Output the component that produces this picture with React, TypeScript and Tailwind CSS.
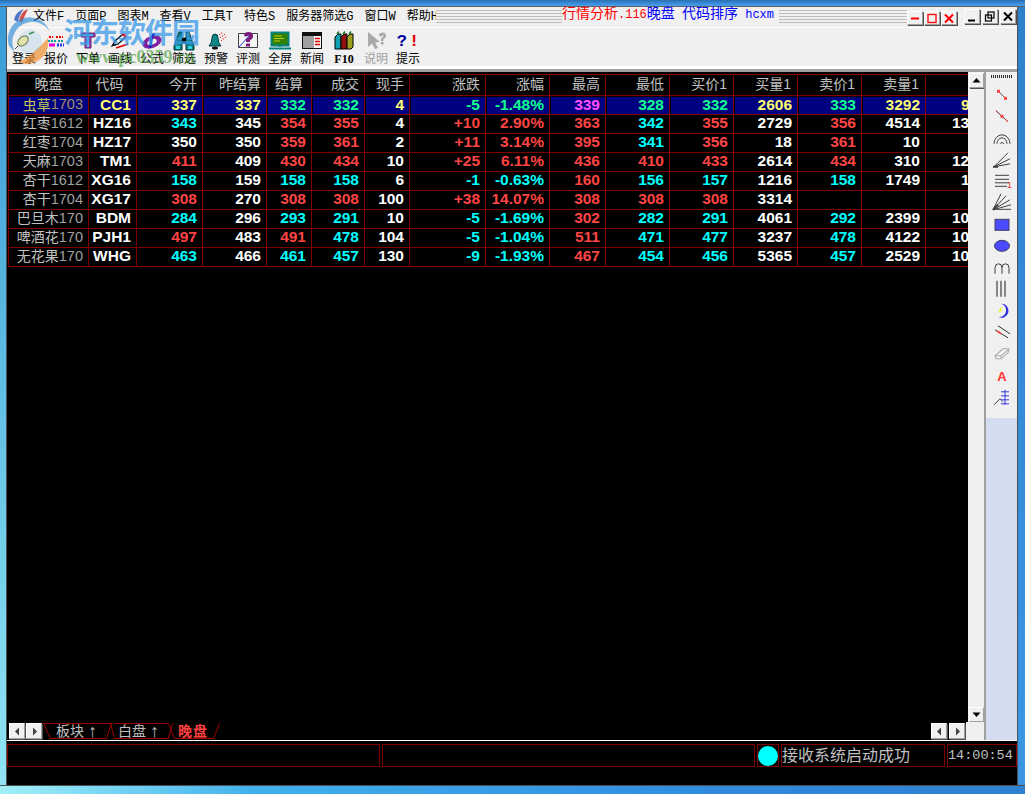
import React from "react";

const MONO = "font-['Liberation_Mono','Noto_Sans_CJK_SC',monospace]";
const SANS = "font-['Liberation_Sans','Noto_Sans_CJK_SC',sans-serif]";

const COLS =
  "grid grid-cols-[80px_48px_66px_64px_45px_53px_45px_76px_64px_56px_64px_64px_64px_64px_64px_42px]";

const COLOR: Record<string, string> = {
  r: "text-[#ff4444]",
  c: "text-[#00ffff]",
  w: "text-white",
  y: "text-[#ffff70]",
  g: "text-[#10ff90]",
  m: "text-[#ff50ff]",
};

const HEAD: [string, string][] = [
  ["晚盘", "justify-center"],
  ["代码", "justify-center pr-[6px]"],
  ["今开", "justify-end pr-[5px]"],
  ["昨结算", "justify-end pr-[5px]"],
  ["结算", "justify-center"],
  ["成交", "justify-end pr-[5px]"],
  ["现手", "justify-end pr-[5px]"],
  ["涨跌", "justify-end pr-[5px]"],
  ["涨幅", "justify-end pr-[5px]"],
  ["最高", "justify-end pr-[5px]"],
  ["最低", "justify-end pr-[5px]"],
  ["买价1", "justify-end pr-[6px]"],
  ["买量1", "justify-end pr-[6px]"],
  ["卖价1", "justify-end pr-[6px]"],
  ["卖量1", "justify-end pr-[6px]"],
  ["", ""],
];

type Row = { name: string; num: string; code: string; cells: string[]; last: string; lastPad: boolean };

const ROWS: Row[] = [
  { name: "虫草", num: "1703", code: "CC1", cells: ["y337", "y337", "g332", "g332", "y4", "g-5", "g-1.48%", "m339", "g328", "g332", "y2606", "g333", "y3292"], last: "y9", lastPad: true },
  { name: "红枣", num: "1612", code: "HZ16", cells: ["c343", "w345", "r354", "r355", "w4", "r+10", "r2.90%", "r363", "c342", "r355", "w2729", "r356", "w4514"], last: "w13", lastPad: false },
  { name: "红枣", num: "1704", code: "HZ17", cells: ["w350", "w350", "r359", "r361", "w2", "r+11", "r3.14%", "r395", "c341", "r356", "w18", "r361", "w10"], last: "", lastPad: false },
  { name: "天麻", num: "1703", code: "TM1", cells: ["r411", "w409", "r430", "r434", "w10", "r+25", "r6.11%", "r436", "r410", "r433", "w2614", "r434", "w310"], last: "w12", lastPad: false },
  { name: "杏干", num: "1612", code: "XG16", cells: ["c158", "w159", "c158", "c158", "w6", "c-1", "c-0.63%", "r160", "c156", "c157", "w1216", "c158", "w1749"], last: "w1", lastPad: true },
  { name: "杏干", num: "1704", code: "XG17", cells: ["r308", "w270", "r308", "r308", "w100", "r+38", "r14.07%", "r308", "r308", "r308", "w3314", "w", "w"], last: "", lastPad: false },
  { name: "巴旦木", num: "170", code: "BDM", cells: ["c284", "w296", "c293", "c291", "w10", "c-5", "c-1.69%", "r302", "c282", "c291", "w4061", "c292", "w2399"], last: "w10", lastPad: false },
  { name: "啤酒花", num: "170", code: "PJH1", cells: ["r497", "w483", "r491", "c478", "w104", "c-5", "c-1.04%", "r511", "c471", "c477", "w3237", "c478", "w4122"], last: "w10", lastPad: false },
  { name: "无花果", num: "170", code: "WHG", cells: ["c463", "w466", "c461", "c457", "w130", "c-9", "c-1.93%", "r467", "c454", "c456", "w5365", "c457", "w2529"], last: "w10", lastPad: false },
];

function Raised({ className = "", children }: { className?: string; children?: React.ReactNode }) {
  return (
    <div
      className={`flex items-center justify-center bg-[#f0f0f0] border border-t-white border-l-white border-r-[#a0a0a0] border-b-[#a0a0a0] shadow-[1px_1px_0_#505050] ${className}`}
    >
      {children}
    </div>
  );
}

const Tri = ({ d }: { d: "u" | "d" | "l" | "r" }) => (
  <svg width="9" height="9" viewBox="0 0 9 9">
    {d === "u" && <path d="M0.5 6.5 L4.5 2 L8.5 6.5Z" fill="#000" />}
    {d === "d" && <path d="M0.5 2.5 L8.5 2.5 L4.5 7Z" fill="#000" />}
    {d === "l" && <path d="M6 0.5 L6 8.5 L2 4.5Z" fill="#404040" />}
    {d === "r" && <path d="M3 0.5 L3 8.5 L7 4.5Z" fill="#404040" />}
  </svg>
);

function MdiBtn({ kind, red }: { kind: "min" | "max" | "close"; red: boolean }) {
  const c = red ? "#ff0000" : "#000";
  const sw = 2;
  return (
    <Raised className={red ? "w-[16px] h-[14px] bg-[#d8d8d8]" : "w-[16px] h-[15px]"}>
      <svg width="12" height="11" viewBox="0 0 12 11">
        {kind === "min" &&
          (red ? (
            <path d="M2 5.5 H10" stroke={c} strokeWidth={sw} />
          ) : (
            <path d="M2 9.5 H9" stroke={c} strokeWidth={sw} />
          ))}
        {kind === "max" &&
          (red ? (
            <rect x="2" y="1.5" width="8" height="8" fill="none" stroke={c} strokeWidth="1.3" />
          ) : (
            <g fill="none" stroke={c} strokeWidth="1.2">
              <rect x="1.5" y="4" width="6" height="6" />
              <rect x="4" y="1" width="6" height="6" />
            </g>
          ))}
        {kind === "close" && <path d="M2 1.5 L10 9.5 M10 1.5 L2 9.5" stroke={c} strokeWidth={sw} />}
      </svg>
    </Raised>
  );
}

const I = ({ children }: { children: React.ReactNode }) => (
  <svg width="24" height="20" viewBox="0 0 24 20">
    {children}
  </svg>
);

const TOOLBAR: { label: string; icon: React.ReactNode; cls?: string }[] = [
  {
    label: "登录",
    icon: (
      <I>
        <path d="M17 3 L22 1" stroke="#3a8a3a" strokeWidth="1.5" />
        <ellipse cx="11" cy="10" rx="6" ry="4" transform="rotate(-40 11 10)" fill="#f8f0a0" stroke="#707040" />
        <path d="M6 15 L3 18" stroke="#404040" />
      </I>
    ),
  },
  {
    label: "报价",
    icon: (
      <I>
        <rect x="4" y="4" width="16" height="12" fill="#f4e8e8" />
        <path d="M5 6 H9 M12 6 H19" stroke="#e00000" strokeWidth="2" strokeDasharray="2 1" />
        <path d="M4 10 H12 M14 10 H20" stroke="#00a0a0" strokeWidth="2" strokeDasharray="2 1" />
        <path d="M5 14 H11" stroke="#e000e0" strokeWidth="3" />
        <path d="M13 14 H20" stroke="#2040e0" strokeWidth="3" strokeDasharray="2 1" />
      </I>
    ),
  },
  {
    label: "下单",
    icon: (
      <I>
        <path d="M5 2 H19 V6 H15 V17 H9 V6 H5Z" fill="#a040b0" stroke="#602070" />
        <path d="M7 3 H17 V5 H7Z" fill="#40b0e0" />
        <path d="M11 6 H13 V16 H11Z" fill="#60d0f0" />
      </I>
    ),
  },
  {
    label: "画线",
    icon: (
      <I>
        <path d="M4 15 L7 10 L15 3 L18 6 L10 13Z" fill="#fff" stroke="#000" strokeWidth="1.2" />
        <path d="M14 4 L16 2 L19 5 L17 7Z" fill="#e02020" />
        <path d="M6 12 L9 14 L4 15Z" fill="#202020" />
        <path d="M8 17 L20 13" stroke="#e00000" strokeWidth="1.5" />
      </I>
    ),
  },
  {
    label: "公式",
    icon: (
      <I>
        <ellipse cx="12" cy="11" rx="10" ry="6" transform="rotate(-22 12 11)" fill="#8020a0" />
        <ellipse cx="12" cy="11" rx="5" ry="2.5" transform="rotate(-22 12 11)" fill="#f0f0f0" />
        <path d="M15 3 Q12 3 11.5 8 L10 17" stroke="#1820c0" strokeWidth="2.4" fill="none" />
      </I>
    ),
  },
  {
    label: "筛选",
    icon: (
      <I>
        <path d="M7 1 H10 V7 H14 V1 H17 L22 15 V19 H14 V12 H10 V19 H2 V15Z" fill="#108080" stroke="#003838" />
        <path d="M4 15 H8 V18 H4Z M16 15 H20 V18 H16Z" fill="#30d0e0" />
        <path d="M10 7 H14 V12 H10Z" fill="#000" />
      </I>
    ),
  },
  {
    label: "预警",
    icon: (
      <I>
        <path d="M5 15 Q8 12 8 7 Q8 3 11 3 Q14 3 14 7 Q14 12 17 15Z" fill="#108888" stroke="#003838" />
        <ellipse cx="11" cy="17" rx="3" ry="1.5" fill="#101010" />
        <path d="M16 7 L21 3 M17 10 L23 5 M15 4 L19 1" stroke="#f02020" strokeDasharray="1.5 1" />
      </I>
    ),
  },
  {
    label: "评测",
    icon: (
      <I>
        <path d="M2.5 2.5 H21.5 V16.5 H2.5Z" fill="#f4f4f4" stroke="#404040" />
        <path d="M3 16 L14 4" stroke="#2040e0" />
        <path d="M8 5 Q8 1 12.5 1 Q17 1 17 5 Q17 8 14 9 V11 H10 V8 Q13 7 13 5 Q12.5 4 11 5.5Z" fill="#7a1a7a" />
        <rect x="10" y="12.5" width="4" height="3" fill="#7a1a7a" />
      </I>
    ),
  },
  {
    label: "全屏",
    icon: (
      <I>
        <rect x="3.5" y="1.5" width="17" height="13" fill="#308000" stroke="#008080" strokeWidth="2" />
        <path d="M6 5 H14 M6 7.5 H16 M6 10 H12" stroke="#c8c800" />
        <path d="M1 17.5 H23" stroke="#008080" strokeWidth="2" />
        <path d="M10 15 H14" stroke="#008080" />
      </I>
    ),
  },
  {
    label: "新闻",
    icon: (
      <I>
        <rect x="2.5" y="1.5" width="19" height="16" fill="#a0a0a0" stroke="#101010" />
        <rect x="3" y="2" width="18" height="3" fill="#101010" />
        <rect x="14" y="5" width="7" height="12" fill="#f4f4f4" />
        <path d="M15 7.5 H20 M15 10.5 H20 M15 13.5 H20" stroke="#e00000" strokeWidth="1.5" />
      </I>
    ),
  },
  {
    label: "F10",
    cls: "text-black font-['Liberation_Serif',serif] font-bold",
    icon: (
      <I>
        <path d="M3 6 L6 3 H9 V18 H3Z" fill="#10a0b0" stroke="#000" />
        <path d="M9 6 L12 3 H15 V18 H9Z" fill="#901010" stroke="#000" />
        <path d="M15 6 L18 3 H21 V16 L19 18 H15Z" fill="#a0a020" stroke="#000" />
        <path d="M5 3 L7 0.5 M11 3 L13 0.5 M17 3 L19 0.5" stroke="#108020" strokeWidth="1.5" />
      </I>
    ),
  },
  {
    label: "说明",
    cls: "text-[#a0a0a0]",
    icon: (
      <I>
        <path d="M4 1 V16 L8 12.5 L11 18 L14 17 L11 11.5 L16 11Z" fill="#a8a8a8" />
        <path d="M15 5 Q15 1.5 18.5 1.5 Q22 1.5 22 5 Q22 7 19.5 8 V10 H17 V7 Q19.5 6.5 19.5 5 Q18.5 3.5 17.5 5.5Z" fill="#a8a8a8" />
        <rect x="17" y="11" width="2.5" height="2.5" fill="#a8a8a8" />
      </I>
    ),
  },
  {
    label: "提示",
    icon: (
      <span className={`h-[20px] flex items-center gap-[2px] text-[17px] font-bold leading-none ${MONO}`}>
        <span className="text-[#0000a0]">?</span>
        <span className="text-[#e00000]">!</span>
      </span>
    ),
  },
];

const L = "#404040";
const TOOLS: React.ReactNode[] = [
  <>
    <path d="M6 6 L14 14" stroke="#505050" />
    <rect x="5" y="5" width="3" height="3" fill="#ff4040" />
    <rect x="12" y="12" width="3" height="3" fill="#ff4040" />
  </>,
  <>
    <path d="M4 4 L16 15" stroke="#303030" />
    <path d="M4 4 L6 6 M13 12 L16 15" stroke="#ff3030" />
    <rect x="8.5" y="8" width="3" height="3" fill="#ff4040" />
  </>,
  <g fill="none" stroke={L}>
    <path d="M2 16 A8 9 0 0 1 18 16" />
    <path d="M5 16 A5 6 0 0 1 15 16" />
    <path d="M8 16 A2.5 3 0 0 1 12 16" />
  </g>,
  <g fill="none" stroke={L}>
    <path d="M2 17 L16 3 M2 17 L18 9 M2 17 L18 14" />
    <path d="M1 17 L6 17" strokeWidth="2" />
  </g>,
  <>
    <path d="M3 4.5 H17 M3 8.5 H17 M3 12 H17 M3 15.5 H15" stroke={L} />
    <text x="15" y="17" fontSize="9" fill="#ff3030" fontFamily="Liberation Sans">1</text>
  </>,
  <g fill="none" stroke={L}>
    <path d="M1 17 L9 1 M1 17 L14 3 M1 17 L18 7 M1 17 L19 12 M1 16.5 H19" />
    <path d="M1 17 L6 12" strokeWidth="2" />
  </g>,
  <rect x="3" y="4.5" width="14" height="11" fill="#4a4aff" stroke="#404060" />,
  <ellipse cx="10" cy="10" rx="7.5" ry="5.5" fill="#4a4aff" stroke="#404060" />,
  <path d="M3 16 V10 Q3 6 6.5 6 Q10 6 10 10 V16 M10 10 Q10 6 13.5 6 Q17 6 17 10 V16" fill="none" stroke={L} />,
  <path d="M5 2 V18 M9 2 V18 M13 2 V18" stroke={L} strokeWidth="1.2" />,
  <>
    <path d="M9 3 A7 7 0 1 1 6 16 A6 6 0 0 0 9 3Z" fill="#3030e0" />
    <path d="M9 6 L10 10 L6 12 Z" fill="#f0f030" />
  </>,
  <>
    <path d="M3 7 L16 15 M6 3 L18 11" stroke="#303030" />
    <path d="M5 8 L9 11" stroke="#ff3030" strokeWidth="1.5" />
  </>,
  <path d="M3 12 L11 5 H17 L16 9 L9 15 H4Z M3 12 L9 12 L9 15 M9 12 L16 6" fill="#f4f4f4" stroke="#a8a8a8" strokeWidth="1.1" />,
  <text x="10" y="15" textAnchor="middle" fontSize="13" fontWeight="bold" fill="#ff3030" fontFamily="Liberation Sans">A</text>,
  <>
    <path d="M2 18 L8 12 L11 15" fill="none" stroke="#404040" />
    <path d="M13 3 V18 M9 5 H17 M9 9 H17 M9 13 H17 M9 17 H17" stroke="#3a3ae0" />
  </>,
];

function Cell({ v, sel }: { v: string; sel: boolean }) {
  const color = COLOR[v[0]] ?? "";
  return (
    <div
      className={`h-[19px] flex items-center justify-end pr-[5px] pb-[2px] border-r border-b border-[#800000] text-[15.5px] font-bold leading-none ${color} ${
        sel ? "bg-[#000080] border-t-1 border-t-black border-l-1 border-l-black" : ""
      }`}
    >
      {v.slice(1)}
    </div>
  );
}

export default function App() {
  return (
    <div className={`w-[1025px] h-[794px] overflow-hidden flex flex-col relative bg-black ${SANS}`}>
      <div className="h-[7px] shrink-0 bg-[linear-gradient(180deg,#2a6fb0,#3a8ede_60%,#4aa0e8)] border-b border-[#606060]" />
      <div className="flex-1 min-h-0 flex">
        <div className="w-[7px] shrink-0 bg-[linear-gradient(180deg,#3a9ad8,#58b8e0_40%,#90e4f4)] border-r border-[#505050]" />
        <div className="flex-1 min-w-0 flex flex-col bg-black">
          {/* menu bar */}
          <div className="h-[20px] shrink-0 flex bg-[#f0f0f0]">
            <div className={`w-[429px] shrink-0 pl-[26px] flex items-center gap-[11px] overflow-hidden text-[12px] leading-none text-black whitespace-nowrap ${MONO}`}>
              {["文件F", "页面P", "图表M", "查看V", "工具T", "特色S", "服务器筛选G", "窗口W", "帮助H"].map((m) => (
                <span key={m}>{m}</span>
              ))}
            </div>
            <div className="w-[126px] shrink-0 mt-[3px] h-[15px] bg-[repeating-linear-gradient(to_bottom,#bdbdbd_0,#bdbdbd_1px,transparent_1px,transparent_3px)]" />
            <div className={`w-[217px] shrink-0 text-[14px] leading-[14px] whitespace-pre ${MONO}`}>
              <span className="text-[#ff0000]">
                行情分析<span className="text-[12px]">.116</span>
              </span>
              <span className="text-[#0000ff]">
                晚盘<span className="text-[12px]"> </span>代码排序<span className="text-[12px]"> hcxm</span>
              </span>
            </div>
            <div className="w-[128px] shrink-0 mt-[3px] h-[15px] bg-[repeating-linear-gradient(to_bottom,#bdbdbd_0,#bdbdbd_1px,transparent_1px,transparent_3px)]" />
            <div className="flex items-start pt-[4px] gap-[1px]">
              <MdiBtn kind="min" red />
              <MdiBtn kind="max" red />
              <MdiBtn kind="close" red />
            </div>
            <div className="flex items-start pt-[2px] gap-[2px] ml-[7px]">
              <MdiBtn kind="min" red={false} />
              <MdiBtn kind="max" red={false} />
              <MdiBtn kind="close" red={false} />
            </div>
          </div>
          {/* toolbar */}
          <div className="h-[39px] shrink-0 flex pl-[1px] bg-[#f0f0f0] border-t border-white">
            {TOOLBAR.map((t) => (
              <div key={t.label} className="w-[32px] flex flex-col items-center pt-[3px]">
                {t.icon}
                <span className={`mt-[1px] text-[12px] leading-[14px] whitespace-nowrap ${t.cls ?? "text-black"}`}>
                  {t.label}
                </span>
              </div>
            ))}
          </div>
          <div className="h-[6px] shrink-0 bg-[#f0f0f0] border-t-[3px] border-white border-b-[3px] border-b-[#a0a0a0]" />
          {/* main */}
          <div className="flex-1 min-h-0 flex">
            <div className="flex-1 min-w-0 flex flex-col">
              <div className="flex-1 min-h-0 flex">
                <div className="w-[961px] shrink-0 pt-[2px] pl-[1px] overflow-hidden">
                  <div className="border-l border-[#800000]">
                    <div className={`${COLS} h-[22px] border-t border-[#800000]`}>
                      {HEAD.map(([h, cls], i) => (
                        <div
                          key={i}
                          className={`flex items-center pb-[2px] border-b border-[#800000] text-[14px] leading-none text-[#c0c0c0] ${
                            i < 15 ? "border-r" : ""
                          } ${cls}`}
                        >
                          {h}
                        </div>
                      ))}
                    </div>
                    {ROWS.map((r, ri) => {
                      const sel = ri === 0;
                      return (
                        <div key={r.code} className={COLS}>
                          <div
                            className={`h-[19px] flex items-center justify-end pr-[5px] pb-[2px] border-r border-b border-[#800000] text-[14px] leading-none whitespace-nowrap ${
                              sel ? "bg-[#000080] border-t-1 border-t-black text-[#c8c850]" : "text-[#c0c0c0]"
                            }`}
                          >
                            {r.name}
                            <span className={`text-[14.5px] ${sel ? "text-[#a09060]" : "text-[#a0a0a0]"}`}>{r.num}</span>
                          </div>
                          <div
                            className={`h-[19px] flex items-center justify-end pr-[5px] pb-[2px] border-r border-b border-[#800000] text-[15.5px] font-bold leading-none ${
                              sel ? "bg-[#000080] border-t-1 border-t-black border-l-1 border-l-black text-[#ffff70]" : "text-white"
                            }`}
                          >
                            {r.code}
                          </div>
                          {r.cells.map((v, i) => (
                            <Cell key={i} v={v} sel={sel} />
                          ))}
                          <div
                            className={`h-[19px] -mr-[1px] flex items-center pb-[2px] border-b border-[#800000] text-[15.5px] font-bold leading-none overflow-hidden ${
                              sel ? "bg-[#000080] border-t-1 border-t-black" : ""
                            } ${r.lastPad ? "pl-[35px]" : "pl-[26px]"} ${COLOR[r.last[0]] ?? ""}`}
                          >
                            {r.last.slice(1)}
                          </div>
                        </div>
                      );
                    })}
                  </div>
                </div>
                <div className="flex-1 flex flex-col justify-between bg-[#f0f0f0] pt-[1px]">
                  <Raised className="h-[15px] w-[15px] ml-[1px]">
                    <Tri d="u" />
                  </Raised>
                  <Raised className="h-[15px] w-[15px] ml-[1px]">
                    <Tri d="d" />
                  </Raised>
                </div>
              </div>
              {/* tabs row */}
              <div className="h-[18px] shrink-0 flex relative pt-[1px]">
                <div className="flex pl-[2px] gap-[1px] h-[17px]">
                  <Raised className="w-[16px] h-[16px]">
                    <Tri d="l" />
                  </Raised>
                  <Raised className="w-[16px] h-[16px]">
                    <Tri d="r" />
                  </Raised>
                </div>
                <svg className="absolute left-[36px] top-[1px]" width="184" height="17" viewBox="0 0 184 17">
                  <g fill="none" stroke="#a00000">
                    <path d="M0.5 0.5 L7.5 15.5 H63.5 L68.5 0.5 H0.5" />
                    <path d="M67.5 0.5 L71.5 15.5 H125.5 L129.5 0.5" />
                    <path d="M71.5 0.5 H124.5" />
                    <path d="M125.5 0.5 L131.5 15.5 H170.5 L176.5 0.5" />
                  </g>
                </svg>
                <div className="relative flex items-center h-[16px] text-[14px] leading-none text-[#c0c0c0] pl-[14px]">
                  <span className="w-[62px] flex items-center">
                    板块<span className="ml-[4px] text-[18px] font-['Liberation_Serif',serif]">↑</span>
                  </span>
                  <span className="w-[60px] flex items-center">
                    白盘<span className="ml-[4px] text-[18px] font-['Liberation_Serif',serif]">↑</span>
                  </span>
                  <span className="text-[#ff4040] font-bold tracking-[1px] whitespace-pre">晚盘</span>
                </div>
                <div className="ml-auto flex items-start gap-[2px] pr-[1px]">
                  <Raised className="w-[16px] h-[16px]">
                    <Tri d="l" />
                  </Raised>
                  <Raised className="w-[16px] h-[16px]">
                    <Tri d="r" />
                  </Raised>
                </div>
                <div className="w-[18px] -mt-[1px] bg-[#f0f0f0]" />
              </div>
            </div>
            {/* draw tools */}
            <div className="w-[33px] shrink-0 flex flex-col border-l-2 border-[#a0a0a0]">
              <div className="h-[346px] bg-[#f0f0f0] flex flex-col items-center pt-[3px]">
                <div className="w-[22px] h-[3px] shrink-0 bg-[repeating-linear-gradient(to_right,#303030_0,#303030_1px,transparent_1px,transparent_2px)]" />
                <div className="mt-[6px] flex flex-col items-center">
                  {TOOLS.map((t, i) => (
                    <svg key={i} className="h-[21.6px]" width="20" height="20" viewBox="0 0 20 20">
                      {t}
                    </svg>
                  ))}
                </div>
              </div>
              <div className="flex-1 bg-[#d4dcf0]" />
            </div>
          </div>
          {/* status */}
          <div className="h-[45px] shrink-0 border-t border-white bg-black">
            <div className="mt-[3px] h-[23px] flex gap-[2px] text-[#c0c0c0]">
              <div className="w-[373px] border border-[#800000]" />
              <div className="w-[373px] border border-[#800000]" />
              <div className="w-[22px] border border-[#800000] flex items-center justify-center">
                <div className="w-[20px] h-[20px] rounded-full bg-[#00ffff]" />
              </div>
              <div className="w-[164px] border border-[#800000] flex items-center text-[16px] leading-none whitespace-nowrap">
                接收系统启动成功
              </div>
              <div className={`flex-1 border border-[#800000] flex items-center pl-[0px] text-[13.5px] leading-none ${MONO}`}>
                14:00:54
              </div>
            </div>
          </div>
        </div>
        <div className="w-[8px] shrink-0 bg-[linear-gradient(180deg,#2f80cc,#3a96e4)] border-l border-[#505050]" />
      </div>
      <div className="h-[9px] shrink-0 bg-[linear-gradient(90deg,#a0f0f8,#40b0ec_25%,#2f8ae0_70%,#2f80d0)] border-t border-[#505050]" />

      {/* watermark overlay */}
      <svg className="absolute left-[6px] top-[6px] pointer-events-none" width="60" height="62" viewBox="0 0 60 62">
        <path d="M8 14 Q9 6 18 3 Q13 9 12 16Z" fill="#3060c0" opacity="0.85" />
        <path d="M13 15 Q15 5 22 3 Q19 9 16 17Z" fill="#d03030" opacity="0.85" />
        <path d="M3 40 A21 21 0 0 1 44 26 A17 17 0 0 0 9 46Z" fill="#2f8ed8" opacity="0.65" />
        <path d="M13 56 Q26 50 42 32 Q44 48 30 56 Q20 60 13 56Z" fill="#f09030" opacity="0.7" />
        <circle cx="24" cy="36" r="12" fill="#4aa0e0" opacity="0.15" />
      </svg>
      <div className="absolute left-[64px] top-[14px] pointer-events-none text-[28px] leading-[34px] font-bold tracking-[-1px] text-[#3a9ae8] opacity-75 whitespace-nowrap font-['Noto_Sans_CJK_SC',sans-serif]">
        河东软件园
      </div>
      <div className="absolute left-[76px] top-[47px] pointer-events-none text-[18px] leading-[20px] font-bold text-[#3f9a30] opacity-60 whitespace-nowrap font-['Liberation_Serif',serif]">
        www.pc0359.cn
      </div>
    </div>
  );
}
